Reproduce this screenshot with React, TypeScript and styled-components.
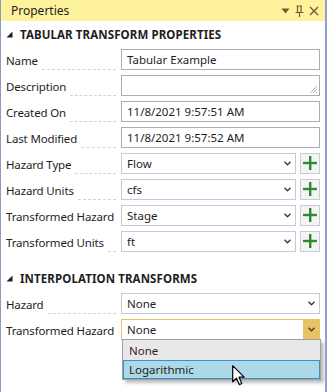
import React from "react";
import styled, { createGlobalStyle } from "styled-components";

const GlobalStyle = createGlobalStyle`
  html, body {
    margin: 0;
    padding: 0;
    background: #ffffff;
  }
  body {
    font-family: "Noto Sans", "Open Sans", sans-serif;
    font-size: 11.5px;
    color: #1e1e1e;
  }
`;

const Window = styled.div`
  position: relative;
  width: 327px;
  height: 392px;
  box-sizing: border-box;
  border-left: 1px solid #8e9bbc;
  border-right: 2px solid #8ea2cd;
  background: #ffffff;
  overflow: hidden;
`;

const TitleBar = styled.div`
  height: 21px;
  background: #fff29d;
  display: flex;
  align-items: center;
  padding: 0 6px 0 10px;
  font-size: 12px;
  color: #1e1e1e;
`;

const Title = styled.span`
  flex: 1;
`;

const TitleIcons = styled.div`
  display: flex;
  align-items: center;
  gap: 5px;
  color: #6b5d33;
`;

const Body = styled.div`
  padding: 0 5px 0 5px;
`;

const SectionHeader = styled.div<{ $top: number }>`
  height: 24px;
  margin-top: ${(p) => p.$top}px;
  display: flex;
  align-items: center;
  gap: 7px;
  font-weight: 700;
  font-size: 11.5px;
  letter-spacing: 0.1px;
  color: #1e1e1e;
`;

const Row = styled.div`
  height: 26px;
  display: grid;
  grid-template-columns: 115px 1fr;
  align-items: center;
`;

const LabelCell = styled.div`
  display: flex;
  align-items: flex-end;
  height: 21px;
  padding-right: 5px;
`;

const LabelText = styled.span`
  white-space: nowrap;
  line-height: 18px;
  padding-top: 3px;
  letter-spacing: -0.15px;
`;

const Leader = styled.span`
  flex: 1;
  margin-left: 4px;
  border-bottom: 1px dashed #d4d4d4;
`;

const FieldCell = styled.div`
  display: flex;
  gap: 4px;
  align-items: center;
`;

const TextBox = styled.div`
  position: relative;
  flex: 1;
  height: 21px;
  box-sizing: border-box;
  border: 1px solid #abadb3;
  background: #ffffff;
  padding: 0 5px;
  display: flex;
  align-items: center;
  white-space: nowrap;
`;

const Grip = styled.svg`
  position: absolute;
  right: 1px;
  bottom: 1px;
`;

const Combo = styled.div<{ $open?: boolean }>`
  flex: 1;
  height: 21px;
  box-sizing: border-box;
  border: 1px solid ${(p) => (p.$open ? "#e5c365" : "#c4cad9")};
  background: #ffffff;
  display: flex;
  align-items: stretch;
`;

const ComboText = styled.span`
  flex: 1;
  padding-left: 5px;
  display: flex;
  align-items: center;
`;

const Chevron = styled.span<{ $open?: boolean }>`
  width: 16px;
  display: flex;
  align-items: center;
  justify-content: center;
  background: ${(p) => (p.$open ? "#e5c365" : "transparent")};
  color: #3c3c3c;
`;

const AddButton = styled.div`
  width: 20px;
  height: 21px;
  box-sizing: border-box;
  border: 1px solid #c8ccd6;
  background: #f4f4f4;
  display: flex;
  align-items: center;
  justify-content: center;
`;

const DropList = styled.div`
  position: absolute;
  left: 121px;
  top: 339px;
  width: 199px;
  box-sizing: border-box;
  border: 1px solid #a0a0a0;
  background: #e8e8e8;
  box-shadow: 3px 3px 3px rgba(0, 0, 0, 0.25);
  padding: 1px 0 0 0;
`;

const DropItem = styled.div<{ $hover?: boolean }>`
  height: 19px;
  box-sizing: border-box;
  display: flex;
  align-items: center;
  padding-left: 5px;
  border: 1px solid ${(p) => (p.$hover ? "#3d8ecb" : "transparent")};
  background: ${(p) => (p.$hover ? "#add8e6" : "transparent")};
  color: ${(p) => (p.$hover ? "#1e1e1e" : "#3a1a1a")};
`;

const Cursor = styled.svg`
  position: absolute;
  left: 231px;
  top: 365px;
`;

const ChevronIcon = () => (
  <svg width="7" height="5" viewBox="0 0 7 5">
    <path d="M0.5 0.8 L3.5 3.8 L6.5 0.8" fill="none" stroke="#3c3c3c" strokeWidth="1.4" />
  </svg>
);

const PlusIcon = () => (
  <svg width="14" height="14" viewBox="0 0 14 14">
    <rect x="6" y="0" width="2.4" height="14" fill="#2e8b2e" />
    <rect x="0" y="5.8" width="14" height="2.4" fill="#2e8b2e" />
  </svg>
);

const Collapse = () => (
  <svg width="7" height="7" viewBox="0 0 7 7">
    <path d="M6.5 0.5 L6.5 6.5 L0.5 6.5 Z" fill="#1e1e1e" />
  </svg>
);

function Label({ text }: { text: string }) {
  return (
    <LabelCell>
      <LabelText>{text}</LabelText>
      <Leader />
    </LabelCell>
  );
}

function ComboRow({ label, value, add, open }: { label: string; value: string; add?: boolean; open?: boolean }) {
  return (
    <Row>
      <Label text={label} />
      <FieldCell>
        <Combo $open={open}>
          <ComboText>{value}</ComboText>
          <Chevron $open={open}>
            <ChevronIcon />
          </Chevron>
        </Combo>
        {add ? (
          <AddButton>
            <PlusIcon />
          </AddButton>
        ) : null}
      </FieldCell>
    </Row>
  );
}

function TextRow({ label, value, grip }: { label: string; value: string; grip?: boolean }) {
  return (
    <Row>
      <Label text={label} />
      <FieldCell>
        <TextBox>
          {value}
          {grip ? (
            <Grip width="10" height="10" viewBox="0 0 10 10">
              <path d="M9 2 L2 9 M9 5 L5 9 M9 8 L8 9" stroke="#b4b4b4" strokeWidth="1" />
            </Grip>
          ) : null}
        </TextBox>
      </FieldCell>
    </Row>
  );
}

export default function App() {
  return (
    <>
      <GlobalStyle />
      <Window>
        <TitleBar>
          <Title>Properties</Title>
          <TitleIcons>
            <svg width="9" height="6" viewBox="0 0 9 6">
              <path d="M0.5 0.5 L8.5 0.5 L4.5 5.5 Z" fill="currentColor" />
            </svg>
            <svg width="9" height="12" viewBox="0 0 9 12">
              <path d="M2.5 1 L2.5 7 M6 1 L6 7 M1.5 1 L7 1 M0.5 7.5 L8.5 7.5 M4.5 8 L4.5 12" stroke="currentColor" strokeWidth="1.2" fill="none" />
            </svg>
            <svg width="10" height="10" viewBox="0 0 10 10">
              <path d="M1 1 L9 9 M9 1 L1 9" stroke="currentColor" strokeWidth="1.4" fill="none" />
            </svg>
          </TitleIcons>
        </TitleBar>
        <Body>
          <SectionHeader $top={1}>
            <Collapse />
            TABULAR TRANSFORM PROPERTIES
          </SectionHeader>
          <TextRow label="Name" value="Tabular Example" />
          <TextRow label="Description" value="" grip />
          <TextRow label="Created On" value="11/8/2021 9:57:51 AM" />
          <TextRow label="Last Modified" value="11/8/2021 9:57:52 AM" />
          <ComboRow label="Hazard Type" value="Flow" add />
          <ComboRow label="Hazard Units" value="cfs" add />
          <ComboRow label="Transformed Hazard" value="Stage" add />
          <ComboRow label="Transformed Units" value="ft" add />
          <SectionHeader $top={12}>
            <Collapse />
            INTERPOLATION TRANSFORMS
          </SectionHeader>
          <ComboRow label="Hazard" value="None" />
          <ComboRow label="Transformed Hazard" value="None" open />
        </Body>
        <DropList>
          <DropItem>None</DropItem>
          <DropItem $hover>Logarithmic</DropItem>
        </DropList>
        <Cursor width="14" height="21" viewBox="0 0 14 21">
          <path d="M0.7 0.7 L0.7 16.8 L4.5 13.2 L7.3 19.6 L9.8 18.5 L7 12.2 L12.2 12.2 Z" fill="#ffffff" stroke="#000000" strokeWidth="1.2" strokeLinejoin="round" />
        </Cursor>
      </Window>
    </>
  );
}
